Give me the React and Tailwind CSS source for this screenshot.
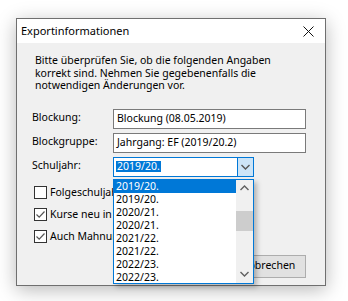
import React from "react";

const font = { fontFamily: '"Noto Sans", "Liberation Sans", sans-serif' };

const Chevron = ({ up, className }) => (
  <svg width="9" height="6" viewBox="0 0 9 6" className={className}>
    <path
      d={up ? "M0.5 5 L4.5 1 L8.5 5" : "M0.5 1 L4.5 5 L8.5 1"}
      fill="none"
      stroke="currentColor"
      strokeWidth="1.4"
    />
  </svg>
);

const Check = () => (
  <svg width="11" height="11" viewBox="0 0 11 11">
    <path d="M1.5 5.5 L4.2 8.2 L9.5 2.5" fill="none" stroke="#555" strokeWidth="1.2" />
  </svg>
);

const CheckRow = ({ checked, label }) => (
  <div className="flex items-center h-[13px] overflow-visible">
    <div className="w-[13px] h-[13px] shrink-0 border border-[#333] bg-white flex items-center justify-center">
      {checked && <Check />}
    </div>
    <span className="ml-[3px] leading-[13px] whitespace-nowrap">{label}</span>
  </div>
);

const years = [
  "2019/20.",
  "2019/20.",
  "2020/21.",
  "2020/21.",
  "2021/22.",
  "2021/22.",
  "2022/23.",
  "2022/23.",
];

export default function App() {
  return (
    <div className="w-[348px] h-[301px] bg-white overflow-hidden text-[10.5px] text-black" style={font}>
      <div className="mt-[18px] ml-[16px] w-[310px] h-[268px] border border-[#6f6f6f] bg-[#f0f0f0] flex flex-col shadow-[0_4px_18px_rgba(0,0,0,0.28)]">
        {/* title bar */}
        <div className="h-[24px] shrink-0 bg-white flex items-center pl-[4px] pr-[11px]">
          <span className="flex-1 text-[11px] leading-[24px]">Exportinformationen</span>
          <svg width="11" height="11" viewBox="0 0 11 11">
            <path d="M0.5 0.5 L10.5 10.5 M10.5 0.5 L0.5 10.5" stroke="#111" strokeWidth="1" />
          </svg>
        </div>

        {/* body */}
        <div className="flex-1 flex flex-col pl-[15px] pr-[19px]">
          <p className="ml-[3px] mt-[11px] leading-[12.5px]">
            Bitte überprüfen Sie, ob die folgenden Angaben
            <br />
            korrekt sind. Nehmen Sie gegebenenfalls die
            <br />
            notwendigen Änderungen vor.
          </p>

          <div className="mt-[17px] flex flex-col gap-[4px]">
            <div className="flex h-[20px]">
              <span className="w-[81px] pt-[2px] leading-[13px]">Blockung:</span>
              <div className="flex-1 border border-[#7a7a7a] bg-white px-[3px] flex items-center">
                Blockung (08.05.2019)
              </div>
            </div>
            <div className="flex h-[20px]">
              <span className="w-[81px] pt-[2px] leading-[13px]">Blockgruppe:</span>
              <div className="flex-1 border border-[#7a7a7a] bg-white px-[3px] flex items-center">
                Jahrgang: EF (2019/20.2)
              </div>
            </div>
            <div className="flex h-[20px]">
              <span className="w-[81px] pt-[2px] leading-[13px]">Schuljahr:</span>
              <div className="relative w-[141px] border border-[#0078d7] bg-white flex">
                <div className="flex-1 flex items-center pl-[2px]">
                  <span className="bg-[#0078d7] text-white leading-[11px] px-[1px]">2019/20.</span>
                </div>
                <div className="w-[16px] bg-[#cce4f7] border-l border-[#0078d7] flex items-center justify-center text-[#555]">
                  <Chevron />
                </div>

                {/* open list */}
                <div className="absolute left-[-1px] top-[21px] w-[141px] h-[105px] border border-[#0078d7] bg-white flex z-10 shadow-[3px_3px_5px_rgba(0,0,0,0.25)]">
                  <div className="flex-1 flex flex-col">
                    {years.map((y, i) => (
                      <div
                        key={i}
                        className={
                          "h-[13px] leading-[13px] pl-[2px] " +
                          (i === 0 ? "bg-[#0078d7] text-white" : "")
                        }
                      >
                        {y}
                      </div>
                    ))}
                  </div>
                  <div className="w-[17px] bg-[#f0f0f0] flex flex-col items-center">
                    <div className="h-[17px] flex items-center justify-center text-[#606060]">
                      <Chevron up />
                    </div>
                    <div className="mt-[14px] w-[17px] h-[20px] bg-[#cdcdcd]" />
                    <div className="flex-1" />
                    <div className="h-[17px] flex items-center justify-center text-[#606060]">
                      <Chevron />
                    </div>
                  </div>
                </div>
              </div>
            </div>
          </div>

          <div className="mt-[9px] ml-[2px] flex flex-col gap-[9px]">
            <CheckRow label="Folgeschuljahr anlegen" />
            <CheckRow checked label="Kurse neu in die Oberstufe" />
            <CheckRow checked label="Auch Mahnungen exportieren" />
          </div>

          <div className="mt-[12px] flex justify-end gap-[6px]">
            <button className="w-[75px] h-[23px] border border-[#adadad] bg-[#e1e1e1]">OK</button>
            <button className="w-[75px] h-[23px] border border-[#adadad] bg-[#e1e1e1]">Abbrechen</button>
          </div>
        </div>
      </div>
    </div>
  );
}
